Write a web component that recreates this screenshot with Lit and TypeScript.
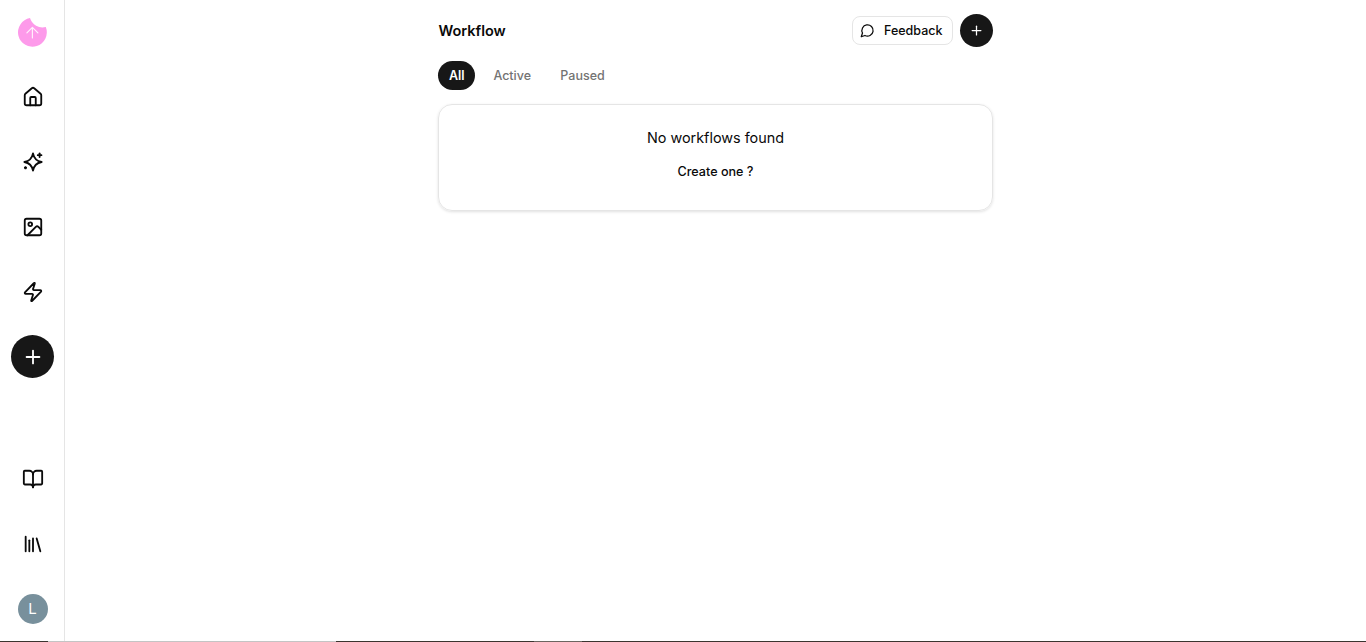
import { LitElement, html, css, svg } from 'lit';
import { customElement } from 'lit/decorators.js';

const icon = (body: unknown, size = 22) => html`<svg
  width="${size}"
  height="${size}"
  viewBox="0 0 24 24"
  fill="none"
  stroke="currentColor"
  stroke-width="2"
  stroke-linecap="round"
  stroke-linejoin="round">
  ${body}
</svg>`;

const house = svg`<path d="M15 21v-8a1 1 0 0 0-1-1h-4a1 1 0 0 0-1 1v8" /><path d="M3 10a2 2 0 0 1 .709-1.528l7-5.999a2 2 0 0 1 2.582 0l7 5.999A2 2 0 0 1 21 10v9a2 2 0 0 1-2 2H5a2 2 0 0 1-2-2z" />`;
const sparkles = svg`<path d="M12 2.6c1 5.4 3.8 8.4 9.4 9.4-5.6 1-8.4 4-9.4 9.4-1-5.4-3.8-8.4-9.4-9.4 5.6-1 8.4-4 9.4-9.4z" /><path d="M19.2 2.5v4" /><path d="M17.2 4.5h4" /><path d="M3.8 17.6v1.4" /><path d="M3.1 18.3h1.4" />`;
const image = svg`<rect width="18" height="18" x="3" y="3" rx="2" ry="2" /><circle cx="9" cy="9" r="2" /><path d="m21 15-3.086-3.086a2 2 0 0 0-2.828 0L6 21" />`;
const zap = svg`<path d="M4 14a1 1 0 0 1-.78-1.63l9.9-10.2a.5.5 0 0 1 .86.46l-1.92 6.02A1 1 0 0 0 13 10h7a1 1 0 0 1 .78 1.63l-9.9 10.2a.5.5 0 0 1-.86-.46l1.92-6.02A1 1 0 0 0 11 14z" />`;
const plus = svg`<path d="M5 12h14" /><path d="M12 5v14" />`;
const bookOpen = svg`<path d="M12 7v14" /><path d="M3 18a1 1 0 0 1-1-1V4a1 1 0 0 1 1-1h5a4 4 0 0 1 4 4 4 4 0 0 1 4-4h5a1 1 0 0 1 1 1v13a1 1 0 0 1-1 1h-6a3 3 0 0 0-3 3 3 3 0 0 0-3-3z" />`;
const library = svg`<path d="m16 6 4 14" /><path d="M12 6v14" /><path d="M8 8v12" /><path d="M4 4v16" />`;
const message = svg`<path d="M7.9 20A9 9 0 1 0 4 16.1L2 22Z" />`;

@customElement('app-root')
export class AppRoot extends LitElement {
  static styles = css`
    :host {
      display: flex;
      flex-direction: column;
      height: 100vh;
      overflow: hidden;
      background: #fff;
      color: #0a0a0a;
      font-family: Inter, 'Liberation Sans', sans-serif;
    }
    .shell {
      flex: 1;
      display: flex;
      min-height: 0;
    }
    .sidebar {
      width: 64px;
      flex: none;
      border-right: 1px solid #e5e5e5;
      display: flex;
      flex-direction: column;
      justify-content: space-between;
    }
    .nav {
      display: flex;
      flex-direction: column;
    }
    .slot {
      width: 65px;
      height: 65px;
      display: flex;
      align-items: center;
      justify-content: center;
    }
    .logo-slot {
      height: 64px;
    }
    .fab {
      width: 43px;
      height: 43px;
      border-radius: 50%;
      background: #171717;
      color: #fff;
      display: flex;
      align-items: center;
      justify-content: center;
    }
    .avatar {
      width: 30px;
      height: 30px;
      border-radius: 50%;
      background: #78909c;
      color: #fff;
      font-size: 15px;
      display: flex;
      align-items: center;
      justify-content: center;
    }
    .main {
      flex: 1;
      display: flex;
      justify-content: center;
    }
    .column {
      width: 555px;
      display: flex;
      flex-direction: column;
    }
    .header {
      height: 61px;
      display: flex;
      align-items: center;
      justify-content: space-between;
    }
    .title {
      font-size: 14.5px;
      font-weight: 600;
      padding-left: 0.4px;
    }
    .actions {
      display: flex;
      align-items: center;
      gap: 7px;
    }
    .feedback {
      width: 101px;
      height: 29px;
      box-sizing: border-box;
      border: 1px solid #e5e5e5;
      border-radius: 8px;
      display: flex;
      align-items: center;
      gap: 9px;
      padding-left: 7px;
      font-size: 12.5px;
      font-weight: 500;
    }
    .add {
      width: 33px;
      height: 33px;
      border-radius: 50%;
      background: #171717;
      color: #fff;
      display: flex;
      align-items: center;
      justify-content: center;
    }
    .tabs {
      display: flex;
      gap: 7.25px;
      margin-bottom: 14px;
    }
    .tab {
      height: 29px;
      padding: 0 11px;
      border-radius: 15px;
      display: flex;
      align-items: center;
      font-size: 12.5px;
      font-weight: 500;
      color: #737373;
    }
    .tab.active {
      background: #171717;
      color: #fff;
      font-weight: 600;
      padding-right: 10.5px;
    }
    .card {
      height: 107px;
      box-sizing: border-box;
      border: 1px solid #e5e5e5;
      border-radius: 14px;
      box-shadow: 0 1px 3px rgba(0, 0, 0, 0.12);
      display: flex;
      flex-direction: column;
      align-items: center;
      padding-top: 23px;
      gap: 15px;
    }
    .empty {
      font-size: 14.4px;
      line-height: 20px;
    }
    .create {
      font-size: 12.6px;
      font-weight: 500;
      line-height: 18px;
    }
    .strip {
      height: 1px;
      flex: none;
      display: flex;
      background: #3b3530;
    }
    .strip .a {
      width: 48px;
    }
    .strip .b {
      width: 288px;
      background: #c4c4c4;
    }
    .strip .c {
      width: 198px;
    }
    .strip .d {
      width: 48px;
      background: #6b6560;
    }
  `;

  render() {
    return html`
      <div class="shell">
        <aside class="sidebar">
          <div class="nav">
            <div class="slot logo-slot">
              <svg width="30" height="30" viewBox="0 0 30 30">
                <path
                  fill="#fd9aea"
                  d="M12 1.1A14.4 14.4 0 1 0 27.8 10A13 13 0 0 1 12 1.1Z" />
                <path
                  d="M14.4 21V10.3M8.9 15.8l5.5-5.5 5.5 5.5"
                  fill="none"
                  stroke="#fff"
                  stroke-opacity=".85"
                  stroke-width="1.2"
                  stroke-linecap="round"
                  stroke-linejoin="round" />
              </svg>
            </div>
            <div class="slot">${icon(house)}</div>
            <div class="slot">${icon(sparkles)}</div>
            <div class="slot">${icon(image)}</div>
            <div class="slot">${icon(zap)}</div>
            <div class="slot"><div class="fab">${icon(plus)}</div></div>
          </div>
          <div class="nav">
            <div class="slot">${icon(bookOpen)}</div>
            <div class="slot">${icon(library)}</div>
            <div class="slot"><div class="avatar">L</div></div>
          </div>
        </aside>
        <main class="main">
          <div class="column">
            <header class="header">
              <span class="title">Workflow</span>
              <div class="actions">
                <div class="feedback">${icon(message, 15)}<span>Feedback</span></div>
                <div class="add">${icon(plus, 15)}</div>
              </div>
            </header>
            <nav class="tabs">
              <span class="tab active">All</span>
              <span class="tab">Active</span>
              <span class="tab">Paused</span>
            </nav>
            <section class="card">
              <div class="empty">No workflows found</div>
              <div class="create">Create one ?</div>
            </section>
          </div>
        </main>
      </div>
      <div class="strip">
        <span class="a"></span><span class="b"></span><span class="c"></span><span class="d"></span>
      </div>
    `;
  }
}
